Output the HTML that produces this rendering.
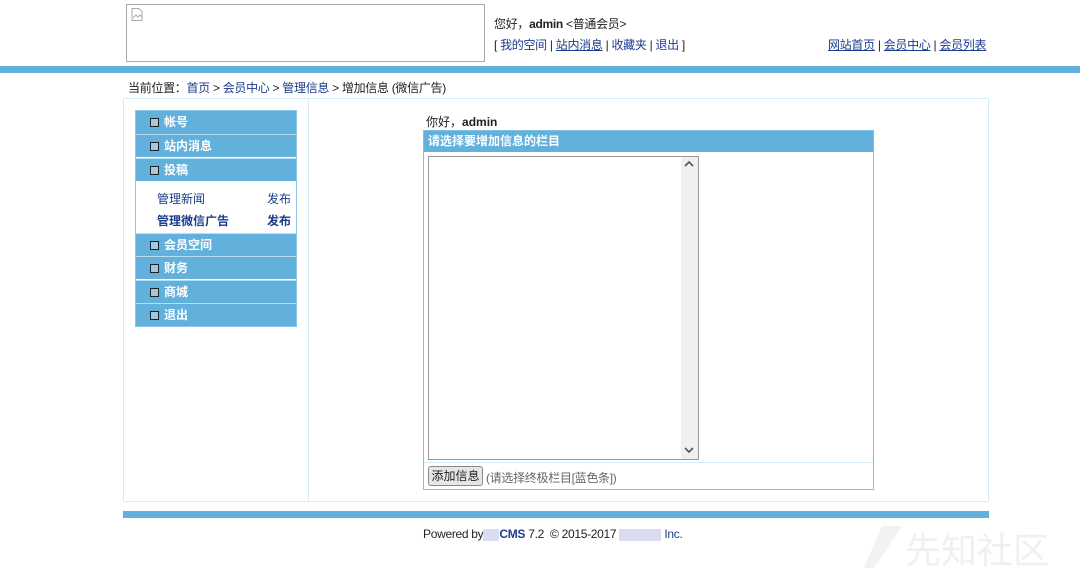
<!DOCTYPE html>
<html><head><meta charset="utf-8">
<style>
*{margin:0;padding:0;box-sizing:border-box}
body{width:1080px;height:575px;background:#fff;font-family:"Liberation Sans","Noto Sans CJK SC",sans-serif;font-size:12px;color:#222;position:relative;overflow:hidden}
.a{position:absolute;white-space:nowrap}
a{color:#1c3c8c;text-decoration:none}
a.u{text-decoration:underline}
.t{letter-spacing:-0.3px}
.menu .it{position:absolute;left:0;width:160px;height:23px;background:#62b1dc;color:#fff;font-weight:bold;line-height:23px;padding-left:28px;font-size:12px;border-top:1px solid #b8def2}
.menu .it i{position:absolute;left:14px;top:7px;width:9px;height:9px;border:1px solid #222;background:#9bc9e6}
</style></head><body>
<div class="a" style="left:126px;top:4px;width:359px;height:58px;border:1px solid #aaa"></div>
<svg class="a" style="left:131px;top:8px" width="13" height="13" viewBox="0 0 13 13"><path d="M1 .5h7l3 3v9H1z" fill="#fff" stroke="#aaa"/><path d="M2 10l3-3 2 2 2-2 2 2" fill="none" stroke="#aaa"/></svg>
<div class="a t" style="left:494px;top:15px">您好，<b>admin</b> &lt;普通会员&gt;</div>
<div class="a t" style="left:494px;top:36px">[ <a>我的空间</a> | <a class="u">站内消息</a> | <a>收藏夹</a> | <a>退出</a> ]</div>
<div class="a t" style="left:828px;top:36px"><a class="u">网站首页</a> | <a class="u">会员中心</a> | <a class="u">会员列表</a></div>
<div class="a" style="left:0;top:66px;width:1080px;height:7px;background:#62b1dc"></div>
<div class="a t" style="left:128px;top:79px">当前位置：<a>首页</a> &gt; <a>会员中心</a> &gt; <a>管理信息</a> &gt; 增加信息 (微信广告)</div>
<div class="a" style="left:123px;top:98px;width:866px;height:404px;border:1px solid #d3ecf8"></div>
<div class="a" style="left:308px;top:99px;width:1px;height:402px;background:#d3ecf8"></div>
<div class="a menu" style="left:135px;top:110px;width:162px;height:217px;border:1px solid #8cc6e8;background:#fff">
<div class="it" style="top:0;border-top:0"><i></i>帐号</div>
<div class="it" style="top:23px"><i></i>站内消息</div>
<div class="it" style="top:47px"><i></i>投稿</div>
<div class="a" style="left:21px;top:79px;color:#1c3c8c">管理新闻</div>
<div class="a" style="left:131px;top:79px;color:#1c3c8c">发布</div>
<div class="a" style="left:21px;top:101px;color:#1c3c8c;font-weight:bold">管理微信广告</div>
<div class="a" style="left:131px;top:101px;color:#1c3c8c;font-weight:bold">发布</div>
<div class="it" style="top:122px"><i></i>会员空间</div>
<div class="it" style="top:145px"><i></i>财务</div>
<div class="it" style="top:169px"><i></i>商城</div>
<div class="it" style="top:192px"><i></i>退出</div>
</div>
<div class="a" style="left:426px;top:113px">你好，<b>admin</b></div>
<div class="a" style="left:423px;top:130px;width:451px;height:360px;border:1px solid #7fc0e6"></div>
<div class="a" style="left:424px;top:131px;width:449px;height:21px;background:#62b1dc;color:#fff;font-weight:bold;line-height:21px;padding-left:4px">请选择要增加信息的栏目</div>
<div class="a" style="left:428px;top:156px;width:271px;height:304px;border:1px solid #999;background:#fff"></div>
<div class="a" style="left:681px;top:157px;width:17px;height:302px;background:#f0f0f0"></div>
<svg class="a" style="left:684px;top:160px" width="10" height="8"><path d="M1 6l4-4 4 4" fill="none" stroke="#555" stroke-width="1.6"/></svg>
<svg class="a" style="left:684px;top:446px" width="10" height="8"><path d="M1 2l4 4 4-4" fill="none" stroke="#555" stroke-width="1.6"/></svg>
<div class="a" style="left:424px;top:462px;width:449px;height:1px;background:#d3ecf8"></div>
<div class="a" style="left:428px;top:466px;width:55px;height:20px;border:1px solid #888;border-radius:3px;background:#e6e6e6;line-height:18px;text-align:center">添加信息</div>
<div class="a t" style="left:486px;top:469px;color:#666">(请选择终极栏目[蓝色条])</div>
<div class="a" style="left:123px;top:511px;width:866px;height:7px;background:#62b1dc"></div>
<div class="a t" style="left:423px;top:527px">Powered by<span style="display:inline-block;width:16px;height:12px;background:#dcdcf0;vertical-align:middle"></span><b style="color:#1c3c8c">CMS</b> 7.2 &nbsp;© 2015-2017 <span style="display:inline-block;width:42px;height:12px;background:#dcdcf0;vertical-align:middle"></span> <a>Inc.</a></div>
<div class="a" style="left:905px;top:522px;font-size:36px;color:#f0f0f0">先知社区</div>
<svg class="a" style="left:862px;top:524px" width="42" height="46"><path d="M20 2h20L12 44H2z" fill="#f2f2f2"/></svg>
</body></html>
